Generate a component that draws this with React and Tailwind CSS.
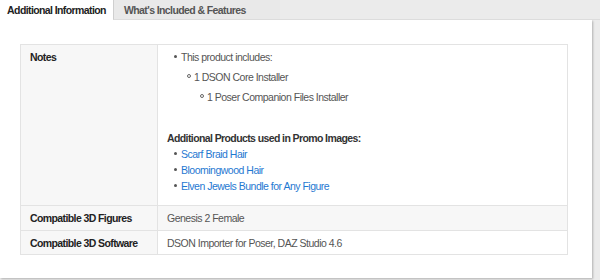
function Bullet({ level, children, link }) {
    const dot =
        level === 1 ? (
            <span className="inline-block w-[3px] h-[3px] rounded-full bg-[#555] mr-[4px] mb-[2px]" />
        ) : (
            <span className="inline-block w-[4px] h-[4px] rounded-full border border-[#666] mr-[3px] mb-[2px]" />
        );
    return (
        <div className="flex items-center h-[14px] whitespace-nowrap">
            {dot}
            <span className={link ? 'text-[#1f78d1]' : 'text-[#555]'}>{children}</span>
        </div>
    );
}

function App() {
    return (
        <div
            className="w-[600px] h-[280px] bg-[#ebebeb] text-[10.5px] leading-[14px] tracking-[-0.5px]"
            style={{ fontFamily: '"Liberation Sans", Arial, sans-serif' }}
        >
            <div className="flex h-[20px]">
                <div className="w-[113px] bg-white flex items-center justify-center font-bold tracking-[-0.6px] text-[#222] whitespace-nowrap">
                    Additional Information
                </div>
                <div className="w-[167px] bg-[#e9e9e9] border-l border-[#cfcfcf] border-b border-b-[#dcdcdc] flex items-center pl-[10px] font-bold tracking-[-0.6px] text-[#555] whitespace-nowrap">
                    What's Included &amp; Features
                </div>
                <div className="flex-1 border-b border-[#dcdcdc]" />
            </div>
            <div className="w-[592px] h-[258px] bg-white shadow-[1px_1px_2px_rgba(0,0,0,0.25)] pt-[24px] pl-[20px] pr-[24px]">
                <table className="w-[548px] border-collapse border border-[#e3e3e3]">
                    <tbody>
                        <tr>
                            <td className="w-[137px] h-[161px] align-top bg-[#f7f7f7] border border-[#e3e3e3] pl-[9px] pt-[5px] font-bold tracking-[-0.6px] text-[#222]">
                                Notes
                            </td>
                            <td className="align-top border border-[#e3e3e3] pl-[16px] pt-[5px]">
                                <Bullet level={1}>This product includes:</Bullet>
                                <div className="pl-[13px] mt-[6px]">
                                    <Bullet level={2}>1 DSON Core Installer</Bullet>
                                    <div className="pl-[13px] mt-[6px]">
                                        <Bullet level={2}>1 Poser Companion Files Installer</Bullet>
                                    </div>
                                </div>
                                <div className="-ml-[7px] mt-[27px] font-bold tracking-[-0.6px] text-[#333]">
                                    Additional Products used in Promo Images:
                                </div>
                                <div className="mt-[2px] flex flex-col gap-[2px]">
                                    <Bullet level={1} link>Scarf Braid Hair</Bullet>
                                    <Bullet level={1} link>Bloomingwood Hair</Bullet>
                                    <Bullet level={1} link>Elven Jewels Bundle for Any Figure</Bullet>
                                </div>
                            </td>
                        </tr>
                        <tr className="bg-[#f7f7f7]">
                            <td className="h-[25px] border border-[#e3e3e3] pl-[9px] font-bold tracking-[-0.6px] text-[#222]">
                                Compatible 3D Figures
                            </td>
                            <td className="border border-[#e3e3e3] pl-[9px] text-[#555]">Genesis 2 Female</td>
                        </tr>
                        <tr>
                            <td className="h-[24px] bg-[#f7f7f7] border border-[#e3e3e3] pl-[9px] font-bold tracking-[-0.6px] text-[#222]">
                                Compatible 3D Software
                            </td>
                            <td className="border border-[#e3e3e3] pl-[9px] text-[#555]">
                                DSON Importer for Poser, DAZ Studio 4.6
                            </td>
                        </tr>
                    </tbody>
                </table>
            </div>
        </div>
    );
}

export default App;
